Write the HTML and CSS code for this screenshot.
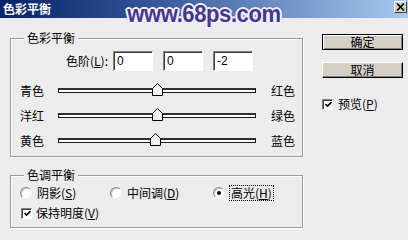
FILE: index.html
```html
<!DOCTYPE html>
<html lang="zh-CN">
<head>
<meta charset="utf-8">
<title>色彩平衡</title>
<link rel="stylesheet" href="styles.css">
</head>
<body>
<div class="titlebar">
  <span class="title">色彩平衡</span>
  <span class="close"><svg width="9" height="8" viewBox="0 0 9 8"><path d="M1 0.5 L8 7.5 M8 0.5 L1 7.5" stroke="#000" stroke-width="1.6"/></svg></span>
</div>
<div class="watermark">www.68ps.com</div>
<div class="content">
  <div class="main">
    <fieldset class="group g1">
      <legend>色彩平衡</legend>
      <div class="levels">
        <span class="lbl">色阶(<u>L</u>):</span>
        <input class="field" type="text" value="0">
        <input class="field" type="text" value="0">
        <input class="field" type="text" value="-2">
      </div>
      <div class="slider-row">
        <span class="l">青色</span>
        <div class="track"><svg class="thumb" style="left: calc(50% - 5px)" width="11" height="13" viewBox="0 0 11 13"><polygon points="0.5,5.5 5.5,0.5 10.5,5.5 10.5,12.5 0.5,12.5" fill="#f2f2f2" stroke="#000"/></svg></div>
        <span class="r">红色</span>
      </div>
      <div class="slider-row">
        <span class="l">洋红</span>
        <div class="track"><svg class="thumb" style="left: calc(50% - 5px)" width="11" height="13" viewBox="0 0 11 13"><polygon points="0.5,5.5 5.5,0.5 10.5,5.5 10.5,12.5 0.5,12.5" fill="#f2f2f2" stroke="#000"/></svg></div>
        <span class="r">绿色</span>
      </div>
      <div class="slider-row">
        <span class="l">黄色</span>
        <div class="track"><svg class="thumb" style="left: calc(49% - 5px)" width="11" height="13" viewBox="0 0 11 13"><polygon points="0.5,5.5 5.5,0.5 10.5,5.5 10.5,12.5 0.5,12.5" fill="#f2f2f2" stroke="#000"/></svg></div>
        <span class="r">蓝色</span>
      </div>
    </fieldset>
    <fieldset class="group g2">
      <legend>色调平衡</legend>
      <div class="radios">
        <span class="radio-item w1"><span class="radio"></span>阴影(<u>S</u>)</span>
        <span class="radio-item w2"><span class="radio"></span>中间调(<u>D</u>)</span>
        <span class="radio-item"><span class="radio on"></span><span class="focus">高光(<u>H</u>)</span></span>
      </div>
      <div class="check-row">
        <span class="checkbox"><svg width="7" height="7" viewBox="0 0 7 7"><path d="M0.5 3 L2.5 5 L6.5 1" fill="none" stroke="#000" stroke-width="1.6"/></svg></span>保持明度(<u>V</u>)
      </div>
    </fieldset>
  </div>
  <div class="side">
    <button class="btn default">确定</button>
    <button class="btn">取消</button>
    <div class="check-row preview">
      <span class="checkbox"><svg width="7" height="7" viewBox="0 0 7 7"><path d="M0.5 3 L2.5 5 L6.5 1" fill="none" stroke="#000" stroke-width="1.6"/></svg></span>预览(<u>P</u>)
    </div>
  </div>
</div>
</body>
</html>
```
FILE: styles.css
```css
* { box-sizing: border-box; }
html, body { margin: 0; padding: 0; }
body {
  width: 408px;
  height: 240px;
  background: #ececec;
  font: 12px/14px "Noto Sans CJK SC", "Liberation Sans", sans-serif;
  color: #000;
  position: relative;
  overflow: hidden;
}
u { text-decoration: underline; text-underline-offset: 1px; }

.titlebar {
  height: 18px;
  display: flex;
  align-items: center;
  justify-content: space-between;
  padding: 0 1px 0 3px;
  background: linear-gradient(to right, #0a246a 0%, #2a4a8e 30%, #a6caf0 100%);
}
.title { color: #fff; font-weight: bold; font-size: 12px; letter-spacing: 0; }
.close {
  align-self: flex-start;
  margin-top: 1px;
  width: 13px;
  height: 12px;
  background: #d4d0c8;
  border: 1px solid;
  border-color: #fff #404040 #404040 #fff;
  display: flex;
  align-items: center;
  justify-content: center;
}

.watermark {
  position: absolute;
  top: 0;
  left: 0;
  right: 0;
  text-align: center;
  font: bold 22px/26px "Liberation Sans", sans-serif;
  letter-spacing: -0.4px;
  color: #45388a;
  transform: scaleY(1.12);
  transform-origin: 50% 0;
  text-shadow:
    2px 0 0 #f2eefc, -2px 0 0 #f2eefc, 0 2px 0 #f2eefc, 0 -2px 0 #f2eefc,
    1.5px 1.5px 0 #f2eefc, -1.5px 1.5px 0 #f2eefc, 1.5px -1.5px 0 #f2eefc, -1.5px -1.5px 0 #f2eefc,
    0 0 2px #5a4a9c, 0 0 3px #5a4a9c;
}

.content {
  display: flex;
  padding: 13px 0 0 10px;
}
.main { width: 293px; }

.group {
  margin: 0;
  padding: 0;
  min-inline-size: 0;
  border: 1px solid #9a9a9a;
  box-shadow: 1px 1px 0 #fff, inset 1px 1px 0 #fff;
}
.group legend {
  margin-left: 13px;
  padding: 0 3px;
  line-height: 14px;
  background: #ececec;
}
.g1 { padding-bottom: 3px; }
.g2 { margin-top: 11px; padding-bottom: 7px; }

.levels {
  display: flex;
  align-items: center;
  height: 20px;
  margin-top: 6px;
  padding-left: 49px;
}
.levels .lbl { width: 48px; text-align: right; margin-right: 5px; }
.field {
  width: 40px;
  height: 20px;
  margin: 0 10px 0 0;
  padding: 2px 3px;
  border: 1px solid;
  border-color: #808080 #fff #fff #808080;
  box-shadow: inset 1px 1px 0 #404040;
  background: #fff;
  font: 12px/14px "Liberation Sans", sans-serif;
  color: #000;
  outline: none;
}

.slider-row {
  display: flex;
  align-items: center;
  height: 25px;
  padding-left: 9px;
}
.levels + .slider-row { margin-top: 7px; }
.slider-row .l { width: 38px; }
.slider-row .r { margin-left: 15px; }
.track {
  position: relative;
  width: 198px;
  height: 5px;
  background: #fff;
  border: 1px solid #1a1a1a;
  border-top-width: 2px;
  border-top-color: #303030;
}
.thumb {
  position: absolute;
  top: -7px;
  display: block;
}

.radios {
  display: flex;
  align-items: center;
  height: 14px;
  margin-top: 4px;
  padding-left: 9px;
}
.radio-item { display: flex; align-items: center; }
.radio-item.w1 { width: 90px; }
.radio-item.w2 { width: 103px; }
.radio {
  width: 12px;
  height: 12px;
  border-radius: 50%;
  background: #fff;
  border: 1px solid;
  border-color: #8c8c8c #f4f4f4 #f4f4f4 #8c8c8c;
  box-shadow: inset 1px 1px 0 #c4c4c4;
  margin-right: 5px;
  position: relative;
}
.radio.on::after {
  content: "";
  position: absolute;
  left: 3px;
  top: 3px;
  width: 4px;
  height: 4px;
  border-radius: 50%;
  background: #000;
}
.focus {
  outline: 1px dotted #000;
  outline-offset: 0;
  padding: 0 1px;
}

.check-row {
  display: flex;
  align-items: center;
  height: 14px;
}
.g2 .check-row { margin-top: 6px; padding-left: 10px; }
.checkbox {
  width: 11px;
  height: 11px;
  background: #fff;
  border: 1px solid;
  border-color: #808080 #fff #fff #808080;
  box-shadow: inset 1px 1px 0 #404040;
  margin-right: 4px;
  display: flex;
  align-items: center;
  justify-content: center;
  padding: 1px 0 0 1px;
}
.checkbox svg { display: block; }

.side {
  margin-left: 19px;
  width: 81px;
  display: flex;
  flex-direction: column;
}
.btn {
  height: 16px;
  width: 81px;
  margin: 3px 0 0;
  padding: 0;
  background: #d4d0c8;
  border: 1px solid;
  border-color: #fff #000 #000 #fff;
  box-shadow: inset -1px -1px 0 #808080;
  font: 12px/14px "Noto Sans CJK SC", "Liberation Sans", sans-serif;
  color: #000;
}
.btn.default {
  border-color: #000;
  box-shadow: inset 1px 1px 0 #fff, inset -1px -1px 0 #808080;
}
.btn + .btn { margin-top: 12px; }
.preview { margin-top: 19px; }
.preview .checkbox { margin-right: 5px; }
```
